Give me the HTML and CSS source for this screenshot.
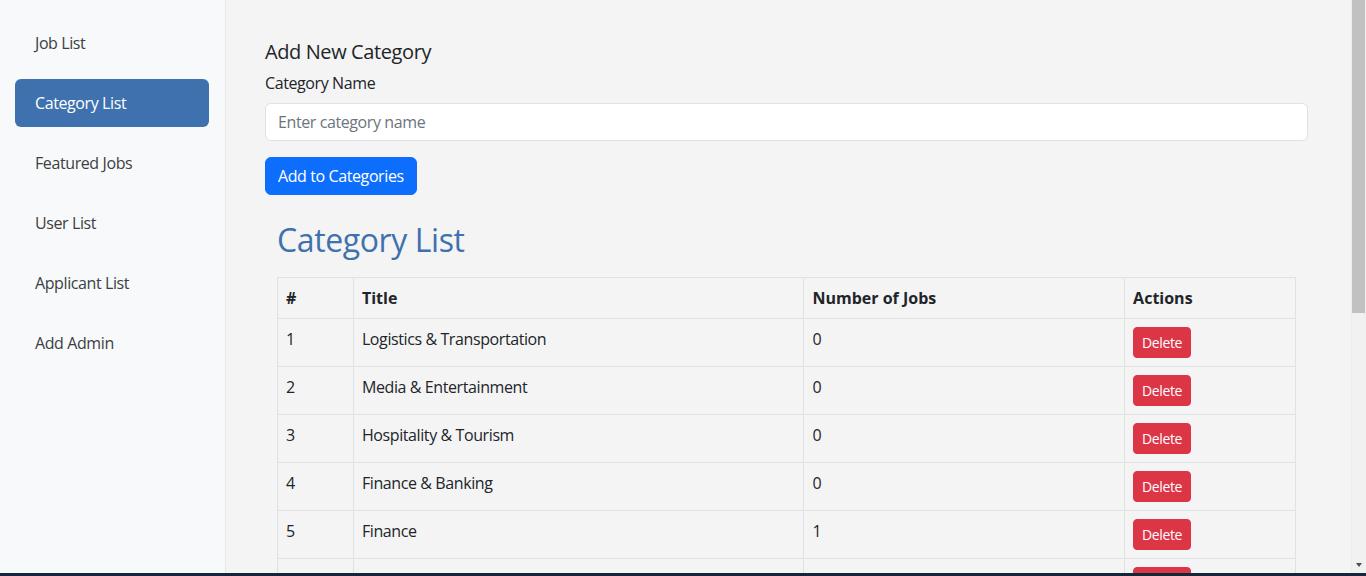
FILE: index.html
```html
<!DOCTYPE html>
<html lang="en">
<head>
<meta charset="utf-8">
<title>Category List</title>
<link rel="stylesheet" href="styles.css">
</head>
<body>
<div class="layout">
  <aside class="sidebar">
    <nav class="nav">
      <a class="nav-link" href="#">Job List</a>
      <a class="nav-link active" href="#">Category List</a>
      <a class="nav-link" href="#">Featured Jobs</a>
      <a class="nav-link" href="#">User List</a>
      <a class="nav-link" href="#">Applicant List</a>
      <a class="nav-link" href="#">Add Admin</a>
    </nav>
  </aside>
  <main class="main">
    <form class="add-form">
      <h5 class="form-title">Add New Category</h5>
      <label class="form-label" for="cat">Category Name</label>
      <input class="form-control" id="cat" type="text" placeholder="Enter category name">
      <button class="btn btn-primary" type="button">Add to Categories</button>
    </form>
    <section class="list">
      <h2 class="list-title">Category List</h2>
      <table class="table">
        <thead>
          <tr><th class="c-num">#</th><th class="c-title">Title</th><th class="c-jobs">Number of Jobs</th><th class="c-act">Actions</th></tr>
        </thead>
        <tbody>
          <tr><td>1</td><td>Logistics &amp; Transportation</td><td>0</td><td><button class="btn btn-danger btn-sm" type="button">Delete</button></td></tr>
          <tr><td>2</td><td>Media &amp; Entertainment</td><td>0</td><td><button class="btn btn-danger btn-sm" type="button">Delete</button></td></tr>
          <tr><td>3</td><td>Hospitality &amp; Tourism</td><td>0</td><td><button class="btn btn-danger btn-sm" type="button">Delete</button></td></tr>
          <tr><td>4</td><td>Finance &amp; Banking</td><td>0</td><td><button class="btn btn-danger btn-sm" type="button">Delete</button></td></tr>
          <tr><td>5</td><td>Finance</td><td>1</td><td><button class="btn btn-danger btn-sm" type="button">Delete</button></td></tr>
          <tr><td>6</td><td>Healthcare</td><td>2</td><td><button class="btn btn-danger btn-sm" type="button">Delete</button></td></tr>
        </tbody>
      </table>
    </section>
  </main>
</div>
<div class="scrollbar" aria-hidden="true">
  <div class="scroll-thumb"></div>
  <div class="scroll-arrow"></div>
</div>
<div class="taskbar" aria-hidden="true"></div>
</body>
</html>
```

FILE: styles.css
```css
* { box-sizing: border-box; }
html, body { margin: 0; padding: 0; }
html { overflow: hidden; }
body {
  font-family: "Open Sans", "Noto Sans", sans-serif;
  font-size: 16px;
  line-height: 1.5;
  letter-spacing: -0.025em;
  color: #212529;
  background: #f4f4f4;
}
.layout {
  display: flex;
  min-height: 100vh;
  padding-right: 15px;
}
.sidebar {
  flex: 0 0 226px;
  background: #f8f9fa;
  border-right: 1px solid #e6e8ea;
  padding: 19px 16px 15px 15px;
}
.nav {
  display: flex;
  flex-direction: column;
  gap: 12px;
}
.nav-link {
  display: flex;
  align-items: center;
  height: 48px;
  padding: 0 20px;
  color: #3c4043;
  text-decoration: none;
  border-radius: 6px;
  font-size: 16px;
}
.nav-link.active {
  background: #3e71ad;
  color: #ffffff;
}
.main {
  flex: 1;
  padding: 40px 43px 40px 39px;
}
.add-form {
  display: flex;
  flex-direction: column;
  align-items: flex-start;
}
.form-title {
  margin: 0 0 7px;
  font-size: 20px;
  font-weight: 400;
  line-height: 1.2;
}
.form-label {
  margin-bottom: 8px;
}
.form-control {
  width: 100%;
  height: 38px;
  padding: 6px 12px;
  font: inherit;
  letter-spacing: inherit;
  color: #212529;
  background: #fff;
  border: 1px solid #dee2e6;
  border-radius: 6px;
  margin-bottom: 16px;
}
.form-control::placeholder { color: #6c757d; }
.btn {
  font-family: inherit;
  font-size: 16px;
  line-height: 1.5;
  letter-spacing: inherit;
  padding: 6px 12px;
  border: 1px solid transparent;
  border-radius: 6px;
  color: #fff;
  cursor: pointer;
}
.btn-primary { background: #0d6efd; border-color: #0d6efd; }
.btn-danger { background: #dc3545; border-color: #dc3545; }
.btn-sm {
  font-size: 14px;
  padding: 4px 8px;
  border-radius: 4px;
}
.list {
  padding: 0 12px;
  margin-top: 26px;
}
.list-title {
  margin: 0 0 18px;
  font-size: 32px;
  font-weight: 400;
  line-height: 1.2;
  color: #3e71ad;
}
.table {
  width: 100%;
  border-collapse: collapse;
}
.table th, .table td {
  border: 1px solid #dee2e6;
  padding: 8px;
  text-align: left;
  vertical-align: top;
}
.table th { font-weight: 700; letter-spacing: 0; }
.c-num { width: 76px; }
.c-title { width: 451px; }
.c-jobs { width: 321px; }
.c-act { width: 171px; }

.scrollbar {
  position: fixed;
  top: 0;
  right: 0;
  width: 15px;
  height: 100vh;
  background: #f1f1f1;
  border-left: 1px solid #ececec;
}
.scroll-thumb {
  margin: 0 1px 0 0;
  height: 313px;
  background: #c1c1c1;
}
.scroll-arrow {
  position: absolute;
  left: 4px;
  bottom: 9px;
  width: 0;
  height: 0;
  border-left: 3.5px solid transparent;
  border-right: 3.5px solid transparent;
  border-top: 4px solid #505050;
}
.taskbar {
  position: fixed;
  left: 0;
  right: 0;
  bottom: 0;
  height: 3px;
  background: #13263a;
}
```
